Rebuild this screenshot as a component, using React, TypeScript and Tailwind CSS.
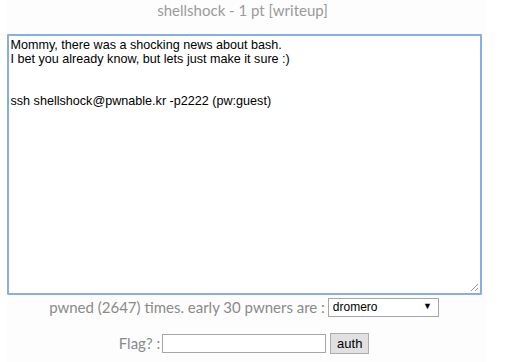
import React from "react";

export default function App() {
  const text =
    "Mommy, there was a shocking news about bash.\nI bet you already know, but lets just make it sure :)\n\n\nssh shellshock@pwnable.kr -p2222 (pw:guest)";
  return (
    <div className="w-[510px] h-[362px] bg-white overflow-hidden">
      <div className="ml-[7px] w-[480px] h-[362px] bg-[#fdfdfd] flex flex-col items-center" style={{ fontFamily: "Lato, 'Liberation Sans', sans-serif" }}>
        <div className="ml-[-9px] h-[21px] text-[15px] leading-[21px] text-[#9a9a9a]">shellshock - 1 pt [writeup]</div>
        <div className="mt-[13px] ml-[-6px] relative w-[475px] h-[261px] border-2 border-[#88aee8] bg-white rounded-[1px]">
          <div
            className="px-[2px] pt-[2px] text-[12.6px] leading-[14px] text-black whitespace-pre"
            style={{ fontFamily: "'Liberation Sans', Arial, sans-serif" }}
          >
            {text}
          </div>
          <svg className="absolute right-[1px] bottom-[1px]" width="9" height="9" viewBox="0 0 9 9">
            <line x1="8" y1="1" x2="1" y2="8" stroke="#9a9a9a" strokeWidth="1" />
            <line x1="8" y1="5" x2="5" y2="8" stroke="#9a9a9a" strokeWidth="1" />
          </svg>
        </div>
        <div className="mt-[1px] ml-[-6px] flex items-center h-[22px]">
          <span className="text-[15px] text-[#8a8a8a] mr-[3px]">pwned (2647) times. early 30 pwners are :</span>
          <div
            className="w-[111px] h-[19px] border border-[#a6a6a6] bg-white flex items-center justify-between pl-[4px] pr-[6px] text-[12px] text-black"
            style={{ fontFamily: "'Liberation Sans', Arial, sans-serif" }}
          >
            <span>dromero</span>
            <span className="text-[9px]">▼</span>
          </div>
        </div>
        <div className="mt-[15px] ml-[-6px] flex items-center h-[21px]">
          <span className="text-[15px] text-[#8a8a8a] mr-[2px]">Flag? :</span>
          <div className="w-[164px] h-[19px] border border-[#a6a6a6] bg-white" />
          <div
            className="ml-[4px] w-[39px] h-[21px] border border-[#adadad] bg-[#e1e1e1] flex items-center justify-center text-[13px] text-black"
            style={{ fontFamily: "'Liberation Sans', Arial, sans-serif" }}
          >
            auth
          </div>
        </div>
      </div>
    </div>
  );
}
